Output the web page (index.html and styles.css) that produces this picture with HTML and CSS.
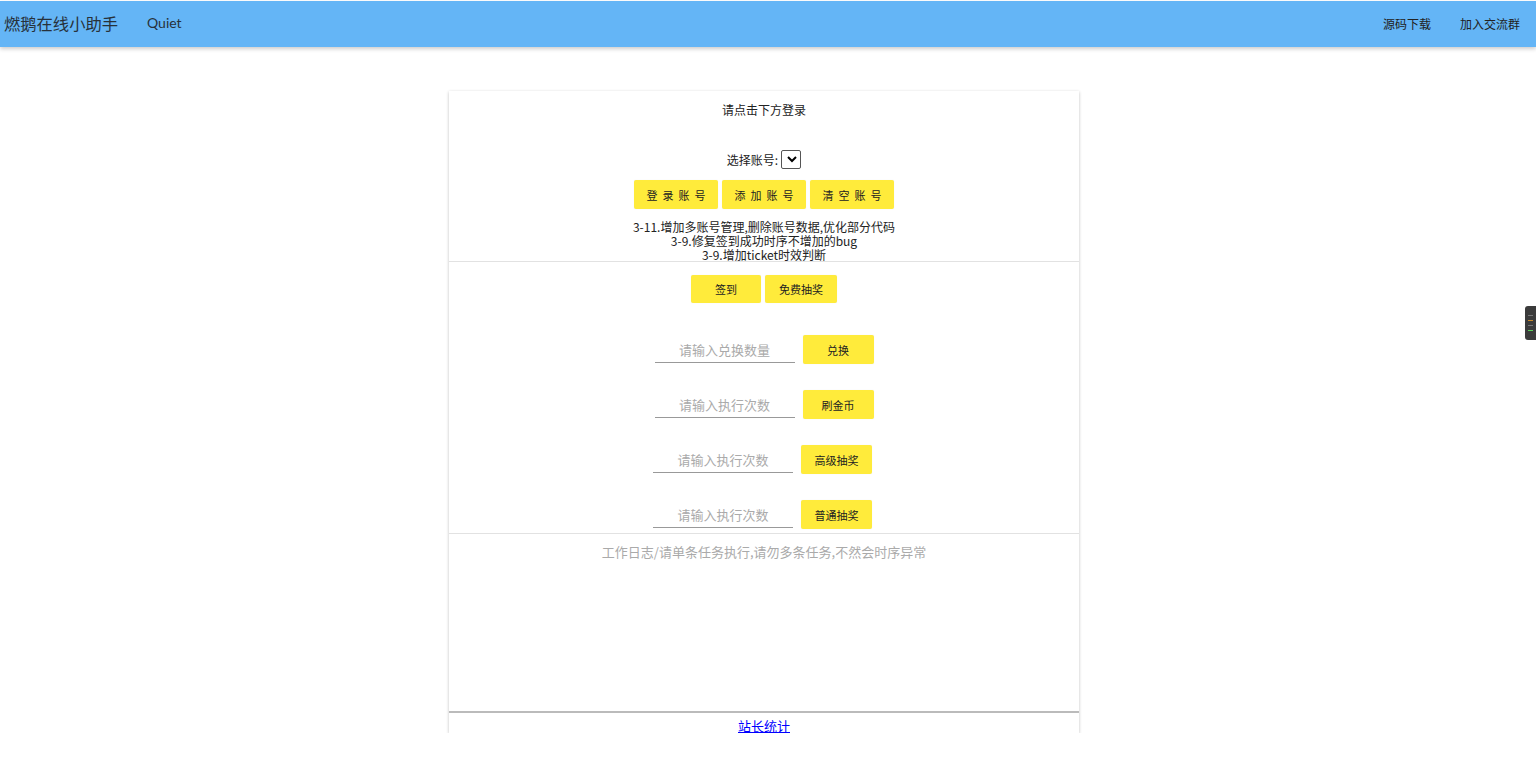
FILE: index.html
```html
<!DOCTYPE html>
<html lang="zh">
<head>
<meta charset="utf-8">
<title>燃鹅在线小助手</title>
<link rel="stylesheet" href="styles.css">
</head>
<body>
<header class="topbar">
  <div class="brand">燃鹅在线小助手</div>
  <div class="sub">Quiet</div>
  <div class="spacer"></div>
  <a class="nav">源码下载</a>
  <a class="nav">加入交流群</a>
</header>
<main class="wrap">
  <section class="card">
    <div class="login">
      <div class="title">请点击下方登录</div>
      <div class="pick">选择账号: <select class="sel"></select></div>
      <div class="btns">
        <button class="btn wide">登录账号</button>
        <button class="btn wide">添加账号</button>
        <button class="btn wide">清空账号</button>
      </div>
      <div class="log-notes">
        <div>3-11.增加多账号管理,删除账号数据,优化部分代码</div>
        <div>3-9.修复签到成功时序不增加的bug</div>
        <div>3-9.增加ticket时效判断</div>
      </div>
    </div>
    <div class="actions">
      <div class="btns small">
        <button class="btn s1">签到</button>
        <button class="btn s2">免费抽奖</button>
      </div>
      <div class="row"><input class="inp" placeholder="请输入兑换数量"><button class="btn act">兑换</button></div>
      <div class="row"><input class="inp" placeholder="请输入执行次数"><button class="btn act">刷金币</button></div>
      <div class="row shift"><input class="inp" placeholder="请输入执行次数"><button class="btn act">高级抽奖</button></div>
      <div class="row shift"><input class="inp" placeholder="请输入执行次数"><button class="btn act">普通抽奖</button></div>
    </div>
    <textarea class="logbox" placeholder="工作日志/请单条任务执行,请勿多条任务,不然会时序异常"></textarea>
    <div class="foot"><a href="#" class="stat">站长统计</a></div>
  </section>
</main>
<div class="ext"><span class="d"></span><span class="d o"></span><span class="d"></span><span class="d g"></span></div>
</body>
</html>
```
FILE: styles.css
```css
html, body {
  margin: 0;
  padding: 0;
  background: #fff;
  font-family: "Noto Sans CJK SC", "Noto Sans", sans-serif;
  color: #222;
}
.topbar {
  margin-top: 1px;
  height: 46px;
  background: #64b5f6;
  display: flex;
  align-items: center;
  padding: 0 16px 0 4px;
  box-shadow: 0 2px 4px rgba(0,0,0,0.2);
  color: #27313a;
}
.brand { font-size: 16.3px; margin-top: -3px; }
.sub { font-size: 14px; margin-left: 29px; margin-top: -3px; font-family: "Lato", "Noto Sans CJK SC", sans-serif; }
.spacer { flex: 1; }
.nav { font-size: 12px; margin-left: 29px; color: #222; margin-top: -1px; }
.wrap {
  display: flex;
  justify-content: center;
  padding-top: 44px;
}
.card {
  width: 630px;
  margin-right: 8px;
  background: #fff;
  box-shadow: 0 1px 3px rgba(0,0,0,0.25);
  display: flex;
  flex-direction: column;
}
.login {
  display: flex;
  flex-direction: column;
  align-items: center;
  border-bottom: 1px solid #e2e2e2;
}
.title { font-size: 12px; margin-top: 10px; line-height: 18px; }
.pick { font-size: 12px; margin-top: 30px; display: flex; align-items: center; gap: 3px; height: 20px; }
.sel {
  width: 20px; height: 19px; padding: 0; font-size: 11px;
  border: 1px solid #555; border-radius: 2px; background: #fff;
}
.btns { display: flex; gap: 4px; margin-top: 11px; }
.btn {
  background: #ffeb3b;
  border: none;
  border-radius: 2px;
  font-family: "Noto Sans CJK SC", sans-serif;
  font-size: 11px;
  color: #222;
  padding: 0;
  box-shadow: 0 0 1px rgba(0,0,0,0.1);
}
.btn.wide { width: 84px; height: 29px; letter-spacing: 5px; text-indent: 5px; }
.log-notes {
  margin-top: 11px;
  font-size: 12px;
  line-height: 14px;
  text-align: center;
  color: #222;
  height: 41px;
}
.actions {
  display: flex;
  flex-direction: column;
  align-items: center;
  border-bottom: 1px solid #e2e2e2;
  padding-bottom: 4px;
}
.btns.small { margin-top: 13px; gap: 4px; }
.btn.s1 { width: 70px; height: 28px; }
.btn.s2 { width: 72px; height: 28px; }
.row { display: flex; align-items: flex-end; gap: 8px; margin-top: 32px; }
.row + .row { margin-top: 26px; }
.row.shift { margin-left: -3px; }
.inp {
  width: 140px;
  height: 26px;
  border: none;
  border-bottom: 1px solid #999;
  outline: none;
  text-align: center;
  font-family: "Noto Sans CJK SC", sans-serif;
  font-size: 13px;
  padding: 0;
  margin-bottom: 1px;
}
.inp::placeholder { color: #aaa; }
.btn.act { width: 71px; height: 29px; }
.logbox {
  height: 179px;
  box-sizing: border-box;
  border: none;
  border-bottom: 2px solid #bbb;
  resize: none;
  outline: none;
  font-family: "Noto Sans CJK SC", sans-serif;
  font-size: 13px;
  text-align: center;
  padding: 8px 0 0;
  margin: 0;
}
.logbox::placeholder { color: #aaa; }
.foot {
  text-align: center;
  height: 20px;
  box-sizing: border-box;
  padding-top: 4px;
  font-size: 13px;
  line-height: 17px;
}
.stat { color: blue; text-decoration: underline; }
.ext {
  position: fixed;
  right: 0;
  top: 306px;
  width: 11px;
  height: 34px;
  background: #3b3b3b;
  border-radius: 3px 0 0 3px;
  display: flex;
  flex-direction: column;
  align-items: center;
  justify-content: center;
  gap: 4px;
}
.ext .d { width: 5px; height: 1px; background: #777; }
.ext .d.o { background: #c88a2a; }
.ext .d.g { background: #5bd05b; }
```
